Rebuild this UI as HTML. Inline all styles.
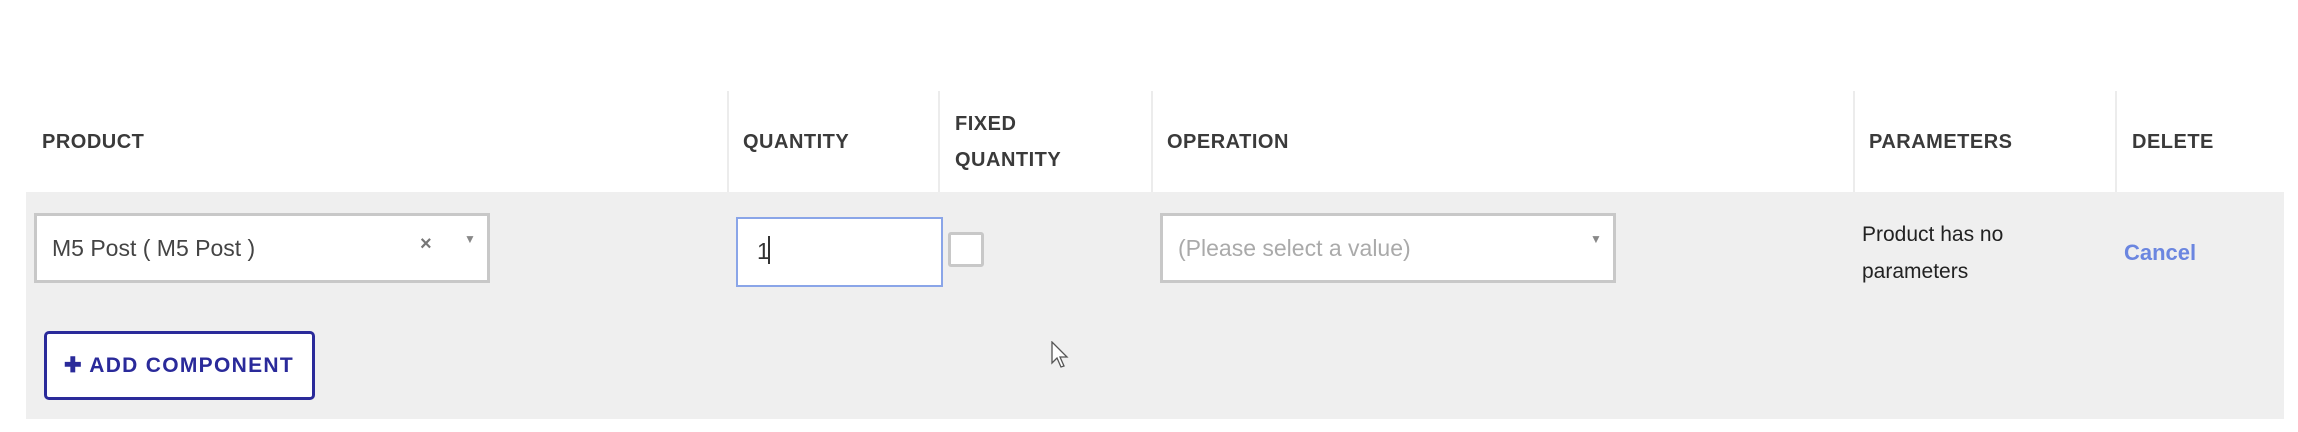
<!DOCTYPE html>
<html><head><style>
*{box-sizing:border-box;margin:0;padding:0}
body{width:2298px;height:432px;background:#fff;position:relative;overflow:hidden;font-family:"Liberation Sans",sans-serif;color:#333}
.a{position:absolute}
.h{font-weight:bold;font-size:20px;color:#3a3a3a;letter-spacing:0.5px}
.div{position:absolute;top:91px;width:2px;height:101px;background:#ececec}
</style></head><body>
<div class="a" style="left:26px;top:192px;width:2258px;height:227px;background:#efefef"></div>
<div class="div" style="left:727px"></div>
<div class="div" style="left:938px"></div>
<div class="div" style="left:1151px"></div>
<div class="div" style="left:1853px"></div>
<div class="div" style="left:2115px"></div>
<div class="a h" style="left:42px;top:131px">PRODUCT</div>
<div class="a h" style="left:743px;top:131px">QUANTITY</div>
<div class="a h" style="left:955px;top:106px;line-height:36px">FIXED<br>QUANTITY</div>
<div class="a h" style="left:1167px;top:131px">OPERATION</div>
<div class="a h" style="left:1869px;top:131px">PARAMETERS</div>
<div class="a h" style="left:2132px;top:131px">DELETE</div>

<div class="a" style="left:34px;top:213px;width:456px;height:70px;background:#fff;border:3px solid #c8c8c8"></div>
<div class="a" style="left:52px;top:235px;font-size:23px;color:#444">M5 Post ( M5 Post )</div>
<div class="a" style="left:420px;top:233px;font-size:20px;color:#777;font-weight:bold">×</div>
<div class="a" style="left:464px;top:232px;font-size:12px;color:#888">▼</div>

<div class="a" style="left:736px;top:217px;width:207px;height:70px;background:#fff;border:2px solid #8aa5e8"></div>
<div class="a" style="left:757px;top:238px;font-size:23px;color:#333">1</div>
<div class="a" style="left:768px;top:236px;width:2px;height:28px;background:#333"></div>

<div class="a" style="left:948px;top:232px;width:36px;height:35px;background:#fff;border:3px solid #c8c8c8;border-radius:3px"></div>

<div class="a" style="left:1160px;top:213px;width:456px;height:70px;background:#fff;border:3px solid #c8c8c8"></div>
<div class="a" style="left:1178px;top:235px;font-size:23px;color:#aaa">(Please select a value)</div>
<div class="a" style="left:1590px;top:232px;font-size:12px;color:#888">▼</div>

<div class="a" style="left:1862px;top:216px;font-size:21px;color:#222;line-height:37px">Product has no<br>parameters</div>
<div class="a" style="left:2124px;top:240px;font-size:22px;color:#6b86e0;font-weight:bold">Cancel</div>

<div class="a" style="left:44px;top:331px;width:271px;height:69px;background:#fff;border:3px solid #2a2a9a;border-radius:5px"></div>
<div class="a" style="left:64px;top:353px;font-size:21px;color:#2a2a9a;font-weight:bold;letter-spacing:1.3px">✚ ADD COMPONENT</div>

<svg class="a" style="left:1051px;top:341px" width="20" height="28" viewBox="0 0 20 28"><path d="M1 1 L1 22 L6 17 L10 26 L13 25 L9 16 L16 16 Z" fill="#fff" stroke="#555" stroke-width="1.3"/></svg>
</body></html>
